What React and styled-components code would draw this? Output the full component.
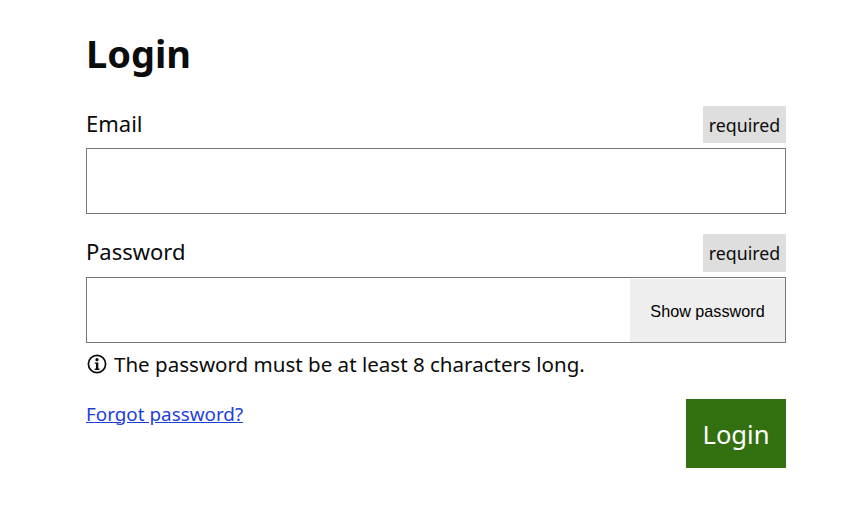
import React from 'react';
import styled, { createGlobalStyle } from 'styled-components';

const Global = createGlobalStyle`
  html, body { margin: 0; padding: 0; background: #fff; }
  body { font-family: "Noto Sans", sans-serif; color: #0b0c0c; }
  * { box-sizing: border-box; }
`;
const Page = styled.form`
  width: 855px; padding: 24px 69px 0 86px; display: flex; flex-direction: column;
`;
const Title = styled.h1`
  margin: 0 0 23.6px; font-size: 38px; line-height: 58px; font-weight: 700;
`;
const Field = styled.div`
  display: flex; flex-direction: column; margin-bottom: 20.4px;
`;
const LabelRow = styled.div`
  display: flex; justify-content: space-between; align-items: flex-start; margin-bottom: 4.8px;
`;
const Label = styled.label`
  font-size: 22px; line-height: 35px;
`;
const Tag = styled.span`
  background: #dedede; font-size: 17.8px; line-height: 39px; height: 37.6px; width: 83px; text-align: center;
`;
const InputWrap = styled.div`
  display: flex; height: 66px; padding: 1px 0 0; border: 1px solid #767676; background: #fff;
`;
const Input = styled.input`
  flex: 1; min-width: 0; border: 0; outline: 0; background: transparent;
`;
const ShowButton = styled.button`
  width: 155px; border: 0; background: #eeeeee; color: #000;
  font-family: "Liberation Sans", Arial, sans-serif; font-size: 16.2px; padding: 2px 0 0;
`;
const Hint = styled.p`
  margin: -20.4px 0 0; font-size: 20.56px; line-height: 42px; display: flex; align-items: center; gap: 7px; padding-left: 1px;
`;
const Footer = styled.div`
  display: flex; justify-content: space-between; align-items: flex-start; margin-top: 14px;
`;
const Forgot = styled.a`
  color: #1d3fd8; font-size: 18.85px; line-height: 30px; text-decoration: underline;
`;
const Submit = styled.button`
  width: 100px; height: 69px; border: 0; background: #33700f; color: #fff;
  font-family: "Noto Sans", sans-serif; font-size: 25.6px; padding: 2px 0 0;
`;

const InfoIcon = () => (
  <svg width="20" height="20" viewBox="0 0 20 20" aria-hidden="true">
    <circle cx="10" cy="10" r="8.6" fill="none" stroke="#0b0c0c" strokeWidth="1.7" />
    <circle cx="10" cy="5.7" r="1.6" fill="#0b0c0c" />
    <path d="M7.8 8.4h3.5v6.2h1.1v1.3H7.7v-1.3h1.3V9.7H7.8z" fill="#0b0c0c" />
  </svg>
);

export default function App() {
  return (
    <>
      <Global />
      <Page onSubmit={(e) => e.preventDefault()}>
        <Title>Login</Title>
        <Field>
          <LabelRow>
            <Label htmlFor="email">Email</Label>
            <Tag>required</Tag>
          </LabelRow>
          <InputWrap><Input id="email" type="email" /></InputWrap>
        </Field>
        <Field>
          <LabelRow>
            <Label htmlFor="password">Password</Label>
            <Tag>required</Tag>
          </LabelRow>
          <InputWrap>
            <Input id="password" type="password" />
            <ShowButton type="button">Show password</ShowButton>
          </InputWrap>
        </Field>
        <Hint><InfoIcon />The password must be at least 8 characters long.</Hint>
        <Footer>
          <Forgot href="#">Forgot password?</Forgot>
          <Submit type="submit">Login</Submit>
        </Footer>
      </Page>
    </>
  );
}
